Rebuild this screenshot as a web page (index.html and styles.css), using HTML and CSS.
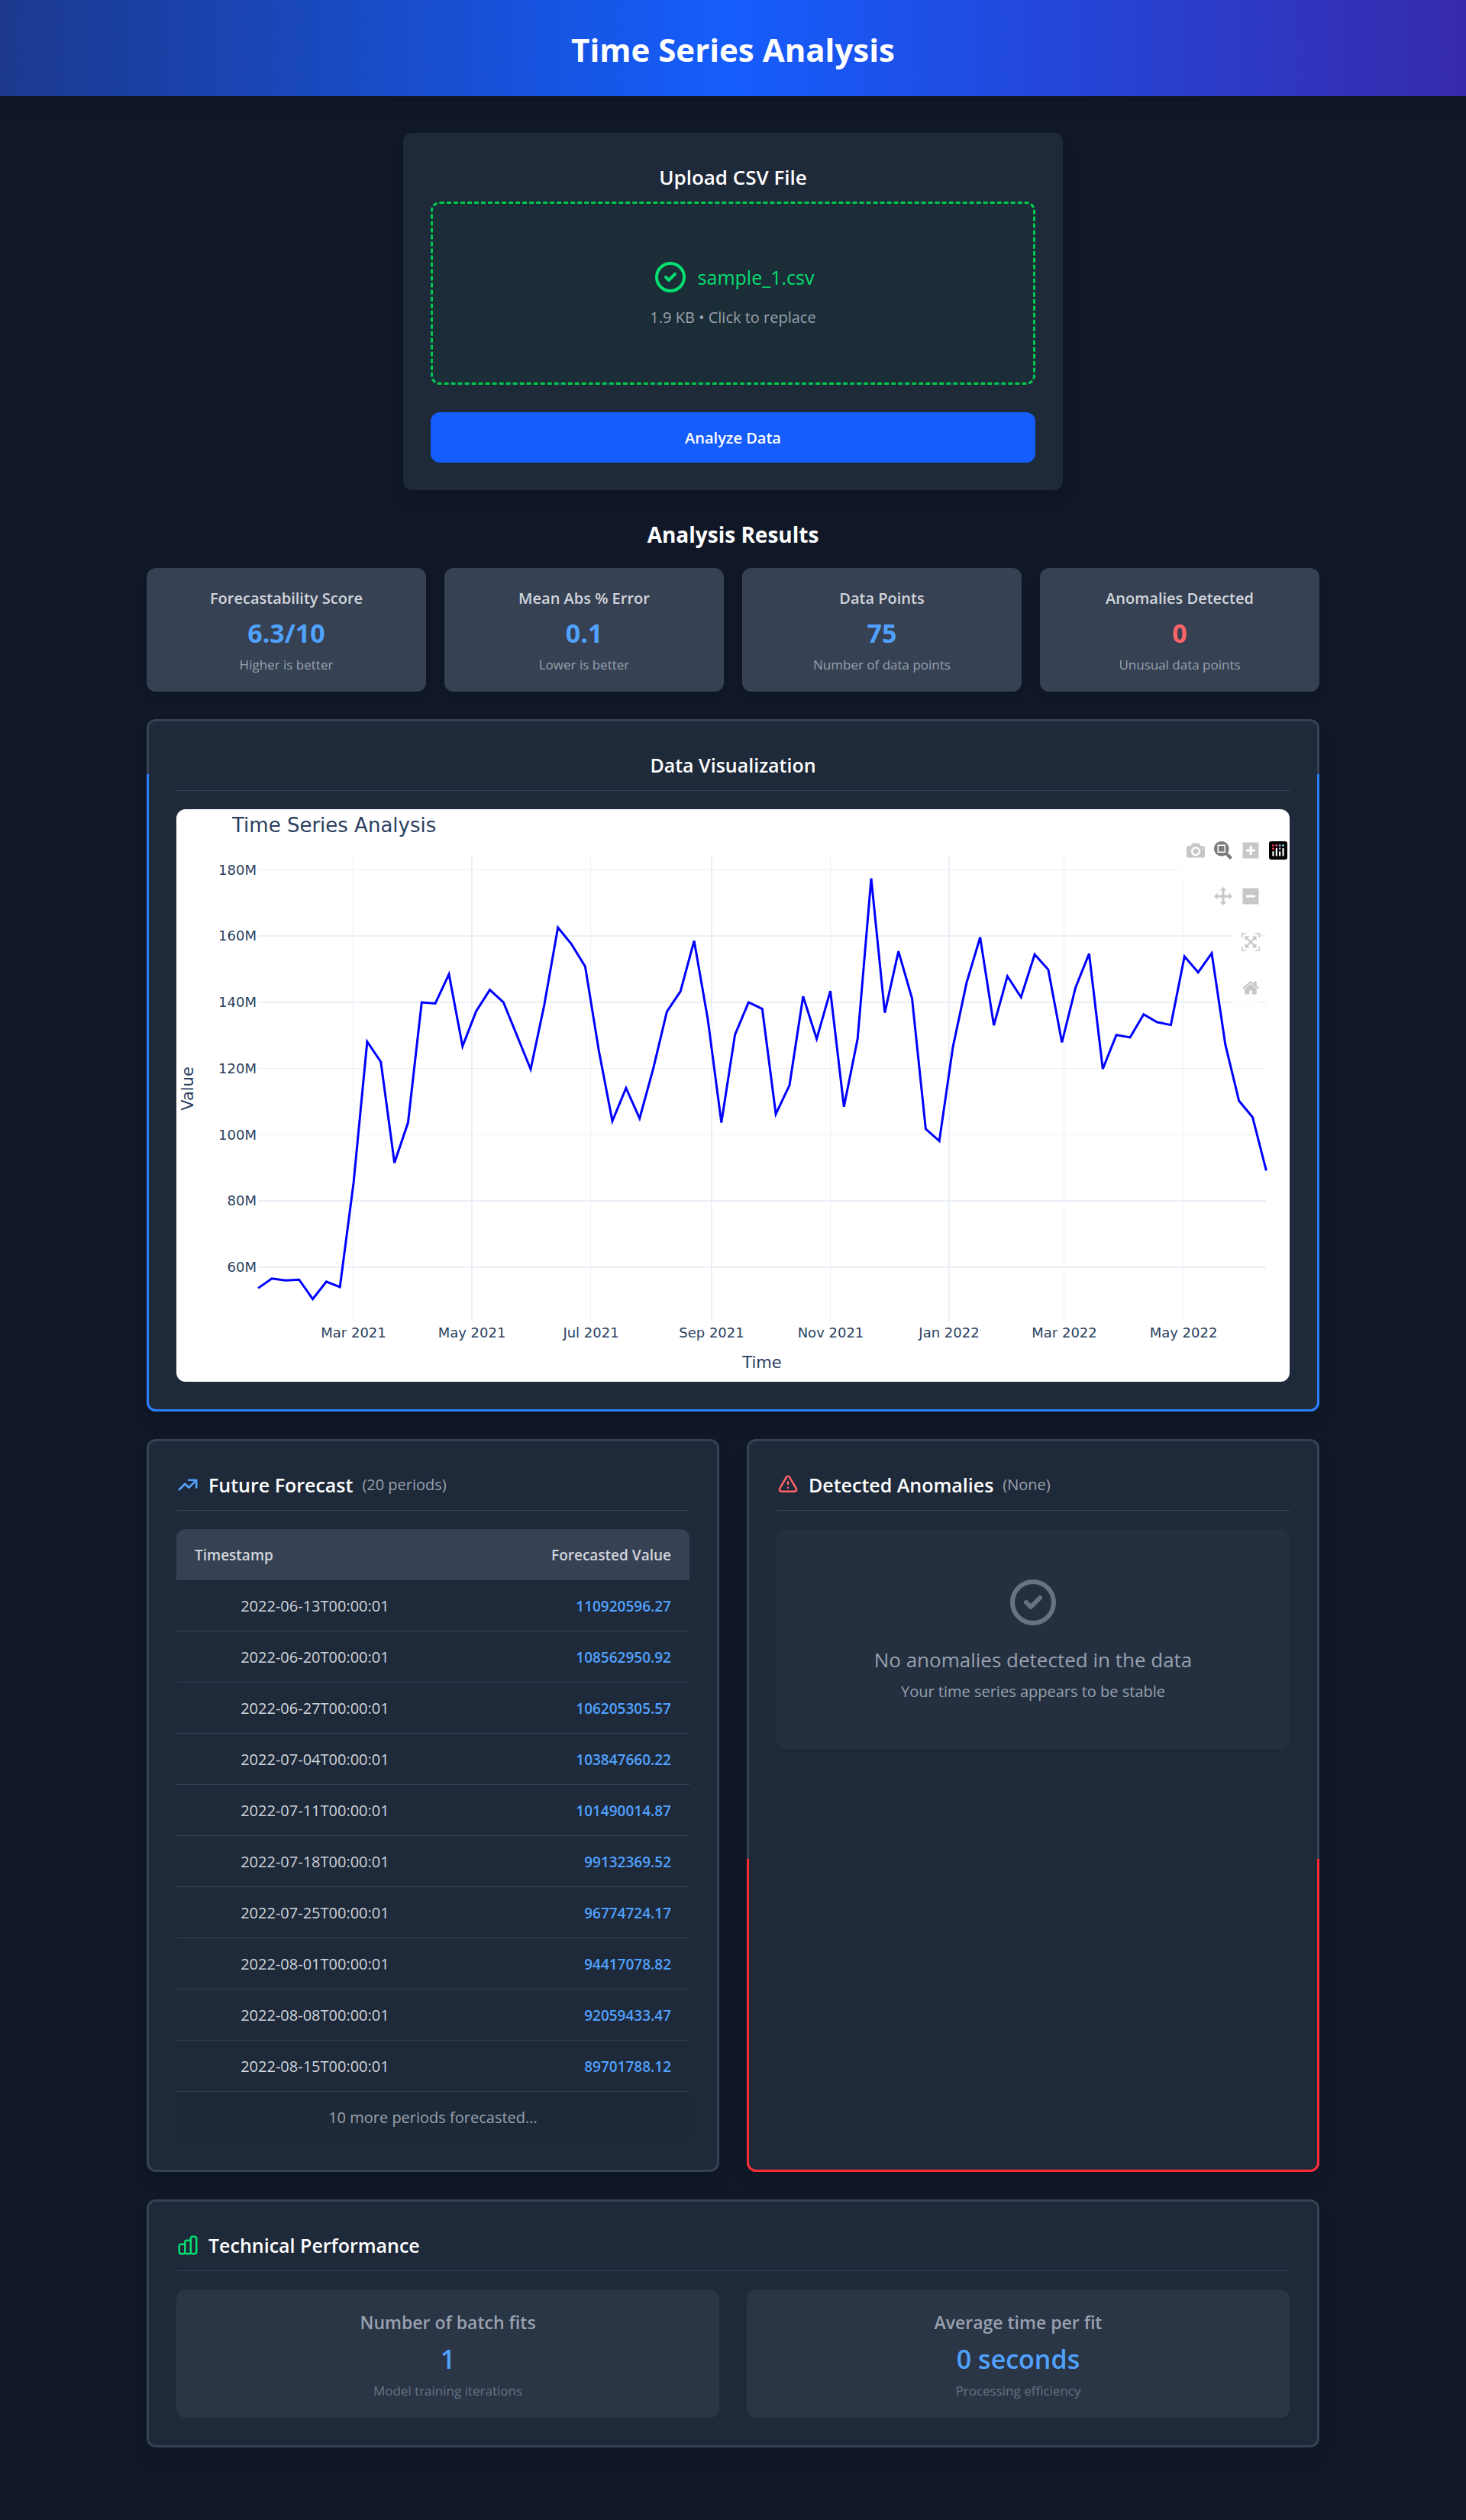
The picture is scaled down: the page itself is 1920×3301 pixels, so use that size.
FILE: index.html
```html
<!DOCTYPE html>
<html lang="en">
<head>
  <meta charset="utf-8">
  <meta name="viewport" content="width=device-width, initial-scale=1">
  <title>Time Series Analysis</title>
  <link rel="stylesheet" href="styles.css">
</head>
<body>
  <header class="site-header">
    <h1>Time Series Analysis</h1>
  </header>

  <main class="page">
    <form class="upload">
      <h2 class="upload-title">Upload CSV File</h2>
      <label class="dropzone" for="csv-file">
        <span class="dropzone-file">
          <svg class="icon-md" viewBox="0 0 24 24" aria-hidden="true"><path d="M9 12l2 2 4-4m6 2a9 9 0 11-18 0 9 9 0 0118 0z"/></svg>
          <span>sample_1.csv</span>
        </span>
        <span class="dropzone-hint">1.9 KB • Click to replace</span>
      </label>
      <input class="visually-hidden" id="csv-file" type="file" accept=".csv">
      <button class="analyze" type="button">Analyze Data</button>
    </form>

    <h2 class="results-title">Analysis Results</h2>

    <section class="stats">
      <div class="stat">
        <h3>Forecastability Score</h3>
        <p class="stat-value">6.3/10</p>
        <p class="stat-note">Higher is better</p>
      </div>
      <div class="stat">
        <h3>Mean Abs % Error</h3>
        <p class="stat-value">0.1</p>
        <p class="stat-note">Lower is better</p>
      </div>
      <div class="stat">
        <h3>Data Points</h3>
        <p class="stat-value">75</p>
        <p class="stat-note">Number of data points</p>
      </div>
      <div class="stat">
        <h3>Anomalies Detected</h3>
        <p class="stat-value stat-value-alert">0</p>
        <p class="stat-note">Unusual data points</p>
      </div>
    </section>

    <section class="card card-chart">
      <h3 class="card-title card-title-center">Data Visualization</h3>
      <div class="chart">
        <svg class="plot" viewBox="0 0 1458 750" role="img" aria-label="Weekly values from January 2021 to June 2022">
          <g class="grid">
            <path d="M107 79.5H1427M107 339.5H1427M107 426.5H1427M231.5 60V671M542.5 60V671M856.5 60V671M1162.5 60V671M1318.5 60V671"/>
            <path class="grid-strong" d="M107 166H1427M107 253H1427M107 513H1427M107 600H1427M387 60V671M701 60V671M1012 60V671"/>
          </g>
          <polyline class="series" points="107.2,627.4 125,614.7 142.9,617.2 160.7,616.2 178.6,641.7 196.4,618.8 214.2,625.9 232.1,489.2 249.9,304.5 267.8,331 285.6,463.2 303.4,410.6 321.3,253 339.1,254.5 357,216.2 374.8,310.6 392.6,264.7 410.5,236.6 428.3,253 446.2,296.8 464,340.7 481.8,256.5 499.7,155 517.5,176.9 535.4,206 553.2,315.7 571,408.6 588.9,365.2 606.7,405 624.6,339.7 642.4,265.2 660.2,238.7 678.1,172.3 695.9,274.4 713.8,410.6 731.6,295.3 749.4,253 767.3,261.6 785.1,399.4 803,361.6 820.8,245.3 838.6,300.9 856.5,238.2 874.3,389.7 892.2,300.9 910,90.7 927.8,266.7 945.7,186.1 963.5,247.9 981.4,418.8 999.2,434.6 1017,311.6 1034.9,227.4 1052.7,167.8 1070.6,283.1 1088.4,218.8 1106.2,246.3 1124.1,190.2 1141.9,210.1 1159.8,305.5 1177.6,233.6 1195.4,189.2 1213.3,340.2 1231.1,295.8 1249,298.9 1266.8,268.8 1284.6,279 1302.5,282.6 1320.3,192.8 1338.2,213.7 1356,188.7 1373.8,308.1 1391.7,382 1409.5,403.5 1427.4,473.4"/>
          <text class="plot-title" x="73" y="30">Time Series Analysis</text>
          <g class="ticks ticks-y">
            <text x="105" y="86">180M</text>
            <text x="105" y="172">160M</text>
            <text x="105" y="259">140M</text>
            <text x="105" y="346">120M</text>
            <text x="105" y="433">100M</text>
            <text x="105" y="519">80M</text>
            <text x="105" y="606">60M</text>
          </g>
          <g class="ticks ticks-x">
            <text x="232" y="692">Mar 2021</text>
            <text x="387" y="692">May 2021</text>
            <text x="543" y="692">Jul 2021</text>
            <text x="701" y="692">Sep 2021</text>
            <text x="857" y="692">Nov 2021</text>
            <text x="1012" y="692">Jan 2022</text>
            <text x="1163" y="692">Mar 2022</text>
            <text x="1319" y="692">May 2022</text>
          </g>
          <text class="axis-title" x="767" y="732">Time</text>
          <text class="axis-title" transform="translate(22 366) rotate(-90)">Value</text>
        </svg>
        <div class="modebar">
          <div class="modebar-group">
            <button type="button" aria-label="Download plot as a png"><svg viewBox="0 0 1000 1000"><path transform="matrix(1 0 0 -1 0 850)" d="m500 450c-83 0-150-67-150-150 0-83 67-150 150-150 83 0 150 67 150 150 0 83-67 150-150 150z m400 150h-120c-16 0-34 13-39 29l-31 93c-6 15-23 28-40 28h-340c-16 0-34-13-39-28l-31-94c-6-15-23-28-40-28h-120c-55 0-100-45-100-100v-450c0-55 45-100 100-100h800c55 0 100 45 100 100v450c0 55-45 100-100 100z m-400-550c-138 0-250 112-250 250 0 138 112 250 250 250 138 0 250-112 250-250 0-138-112-250-250-250z m365 380c-19 0-35 16-35 35 0 19 16 35 35 35 19 0 35-16 35-35 0-19-16-35-35-35z"/></svg></button>
          </div>
          <div class="modebar-group">
            <button class="active" type="button" aria-label="Zoom"><svg viewBox="0 0 1000 1000"><path transform="matrix(1 0 0 -1 0 850)" d="m1000-25l-250 251c40 63 63 138 63 218 0 224-182 406-407 406-224 0-406-182-406-406s183-406 407-406c80 0 155 22 218 62l250-250 125 125z m-812 250l0 438 437 0 0-438-437 0z m62 375l313 0 0-312-313 0 0 312z"/></svg></button>
            <button type="button" aria-label="Pan"><svg viewBox="0 0 1000 1000"><path transform="matrix(1 0 0 -1 0 850)" d="m1000 350l-187 188 0-125-250 0 0 250 125 0-188 187-187-187 125 0 0-250-250 0 0 125-188-188 186-187 0 125 252 0 0-250-125 0 187-188 188 188-125 0 0 250 250 0 0-126 187 188z"/></svg></button>
          </div>
          <div class="modebar-group">
            <button type="button" aria-label="Zoom in"><svg viewBox="0 0 875 1000"><path transform="matrix(1 0 0 -1 0 850)" d="m1 787l0-875 875 0 0 875-875 0z m687-500l-187 0 0-187-125 0 0 187-188 0 0 125 188 0 0 187 125 0 0-187 187 0 0-125z"/></svg></button>
            <button type="button" aria-label="Zoom out"><svg viewBox="0 0 875 1000"><path transform="matrix(1 0 0 -1 0 850)" d="m0 788l0-876 875 0 0 876-875 0z m688-500l-500 0 0 125 500 0 0-125z"/></svg></button>
            <button type="button" aria-label="Autoscale"><svg viewBox="0 0 1000 1000"><path transform="matrix(1 0 0 -1 0 850)" d="m250 850l-187 0-63 0 0-62 0-188 63 0 0 188 187 0 0 62z m688 0l-188 0 0-62 188 0 0-188 62 0 0 188 0 62-62 0z m-875-938l0 188-63 0 0-188 0-62 63 0 187 0 0 62-187 0z m875 188l0-188-188 0 0-62 188 0 62 0 0 62 0 188-62 0z m-125 188l-1 0-93-94-156 156 156 156 92-93 2 0 0 250-250 0 0-2 93-92-156-156-156 156 94 92 0 2-250 0 0-250 0 0 93 93 157-156-157-156-93 94 0 0 0-250 250 0 0 0-94 93 156 157 156-157-93-93 0 0 250 0 0 250z"/></svg></button>
            <button type="button" aria-label="Reset axes"><svg viewBox="0 0 928.6 1000"><path transform="matrix(1 0 0 -1 0 850)" d="m786 296v-267q0-15-11-26t-25-10h-214v214h-143v-214h-214q-15 0-25 10t-11 26v267q0 1 0 2t0 2l321 264 321-264q1-1 1-4z m124 39l-34-41q-5-5-12-6h-2q-7 0-12 3l-386 322-386-322q-7-4-13-4-7 2-12 7l-35 41q-4 5-3 13t6 12l401 334q18 15 42 15t43-15l136-114v109q0 8 5 13t13 5h107q8 0 13-5t5-13v-227l122-102q5-5 6-12t-4-13z"/></svg></button>
          </div>
          <div class="modebar-group">
            <a href="#" aria-label="Produced with Plotly.js"><svg viewBox="0 0 132 132">
              <rect width="132" height="132" rx="18" fill="#000"/>
              <circle cx="30" cy="30" r="8" fill="#f0325a"/>
              <circle cx="30" cy="54" r="8" fill="#f0325a"/>
              <circle cx="54" cy="30" r="8" fill="#e0568c"/>
              <circle cx="78" cy="30" r="8" fill="#a9a0cc"/>
              <circle cx="78" cy="54" r="8" fill="#a9a0cc"/>
              <circle cx="102" cy="30" r="8" fill="#6fd6e6"/>
              <path fill="#fff" d="M30,72a6,6,0,0,0-6,6v24a6,6,0,0,0,12,0V78A6,6,0,0,0,30,72ZM78,72a6,6,0,0,0-6,6v24a6,6,0,0,0,12,0V78A6,6,0,0,0,78,72ZM54,48a6,6,0,0,0-6,6v48a6,6,0,0,0,12,0V54A6,6,0,0,0,54,48ZM102,48a6,6,0,0,0-6,6v48a6,6,0,0,0,12,0V54A6,6,0,0,0,102,48Z"/>
            </svg></a>
          </div>
        </div>
      </div>
    </section>

    <div class="columns">
      <section class="card">
        <h3 class="card-title">
          <svg class="icon-sm icon-blue" viewBox="0 0 24 24" aria-hidden="true"><path d="M13 7h8m0 0v8m0-8l-8 8-4-4-6 6"/></svg>
          <span>Future Forecast</span>
          <span class="card-count">(20 periods)</span>
        </h3>
        <table class="forecast">
          <thead>
            <tr><th scope="col">Timestamp</th><th scope="col">Forecasted Value</th></tr>
          </thead>
          <tbody>
            <tr><td>2022-06-13T00:00:01</td><td>110920596.27</td></tr>
            <tr><td>2022-06-20T00:00:01</td><td>108562950.92</td></tr>
            <tr><td>2022-06-27T00:00:01</td><td>106205305.57</td></tr>
            <tr><td>2022-07-04T00:00:01</td><td>103847660.22</td></tr>
            <tr><td>2022-07-11T00:00:01</td><td>101490014.87</td></tr>
            <tr><td>2022-07-18T00:00:01</td><td>99132369.52</td></tr>
            <tr><td>2022-07-25T00:00:01</td><td>96774724.17</td></tr>
            <tr><td>2022-08-01T00:00:01</td><td>94417078.82</td></tr>
            <tr><td>2022-08-08T00:00:01</td><td>92059433.47</td></tr>
            <tr><td>2022-08-15T00:00:01</td><td>89701788.12</td></tr>
          </tbody>
          <tfoot>
            <tr><td colspan="2">10 more periods forecasted...</td></tr>
          </tfoot>
        </table>
      </section>

      <section class="card card-anomalies">
        <h3 class="card-title">
          <svg class="icon-sm icon-red" viewBox="0 0 24 24" aria-hidden="true"><path d="M12 9v2m0 4h.01m-6.938 4h13.856c1.54 0 2.502-1.667 1.732-3L13.732 4c-.77-1.333-2.694-1.333-3.464 0L3.34 16c-.77 1.333.192 3 1.732 3z"/></svg>
          <span>Detected Anomalies</span>
          <span class="card-count">(None)</span>
        </h3>
        <div class="empty">
          <svg class="icon-lg" viewBox="0 0 24 24" aria-hidden="true"><path d="M9 12l2 2 4-4m6 2a9 9 0 11-18 0 9 9 0 0118 0z"/></svg>
          <p class="empty-title">No anomalies detected in the data</p>
          <p class="empty-note">Your time series appears to be stable</p>
        </div>
      </section>
    </div>

    <section class="card">
      <h3 class="card-title">
        <svg class="icon-sm icon-green" viewBox="0 0 24 24" aria-hidden="true"><path d="M9 19v-6a2 2 0 00-2-2H5a2 2 0 00-2 2v6a2 2 0 002 2h2a2 2 0 002-2zm0 0V9a2 2 0 012-2h2a2 2 0 012 2v10m-6 0a2 2 0 002 2h2a2 2 0 002-2m0 0V5a2 2 0 012-2h2a2 2 0 012 2v14a2 2 0 01-2 2h-2a2 2 0 01-2-2z"/></svg>
        <span>Technical Performance</span>
      </h3>
      <div class="columns">
        <div class="metric">
          <h4>Number of batch fits</h4>
          <p class="metric-value">1</p>
          <p class="metric-note">Model training iterations</p>
        </div>
        <div class="metric">
          <h4>Average time per fit</h4>
          <p class="metric-value">0 seconds</p>
          <p class="metric-note">Processing efficiency</p>
        </div>
      </div>
    </section>
  </main>
</body>
</html>
```
FILE: styles.css
```css
:root {
  --bg: #101828;
  --surface: #1e2939;
  --surface-raised: #364153;
  --text-soft: #d1d5dc;
  --text-muted: #99a1af;
  --text-dim: #6a7282;
  --blue: #51a2ff;
  --red: #ff6467;
  --green: #05df72;
  --shadow: 0 15px 22px -4px rgba(0, 0, 0, 0.1), 0 6px 9px -6px rgba(0, 0, 0, 0.1);
}

* {
  box-sizing: border-box;
  margin: 0;
  padding: 0;
}

body {
  min-height: 100vh;
  background: var(--bg);
  color: #fff;
  font-family: "Open Sans", "Noto Sans", sans-serif;
  font-size: 20px;
  line-height: 30px;
  text-align: center;
}

button {
  border: 0;
  font: inherit;
  cursor: pointer;
}

svg {
  display: block;
}

.site-header {
  padding: 38px 36px 34px;
  background: linear-gradient(to right, #1c398e, #155dfc, #372aac);
  box-shadow: var(--shadow);
}

.site-header h1 {
  font-size: 42px;
  line-height: 54px;
  font-weight: 700;
}

.page {
  display: flex;
  flex-direction: column;
  gap: 36px;
  width: 100%;
  max-width: 1608px;
  margin: 0 auto;
  padding: 48px 36px;
}

/* Upload form */

.upload {
  display: flex;
  flex-direction: column;
  width: 100%;
  max-width: 864px;
  margin: 0 auto;
  padding: 36px;
  border-radius: 12px;
  background: var(--surface);
  box-shadow: var(--shadow);
}

.upload-title {
  margin-bottom: 10px;
  font-size: 26px;
  line-height: 44px;
  font-weight: 600;
}

.dropzone {
  display: flex;
  flex-direction: column;
  gap: 14px;
  padding: 72px 72px 70px;
  border: 3px dashed #00c950;
  border-radius: 12px;
  background: rgba(13, 84, 43, 0.1);
  cursor: pointer;
}

.dropzone-file {
  display: flex;
  align-items: center;
  justify-content: center;
  gap: 12px;
  color: var(--green);
  font-size: 25px;
  font-weight: 500;
}

.dropzone-hint {
  color: var(--text-muted);
}

.visually-hidden {
  position: absolute;
  width: 1px;
  height: 1px;
  overflow: hidden;
  clip-path: inset(50%);
}

.analyze {
  margin-top: 36px;
  padding: 19px 18px 17px;
  border-radius: 12px;
  background: #155dfc;
  color: #fff;
  font-weight: 600;
}

/* Icons */

.icon-sm,
.icon-md,
.icon-lg {
  flex: none;
  fill: none;
  stroke: currentColor;
  stroke-width: 2;
  stroke-linecap: round;
  stroke-linejoin: round;
}

.icon-sm {
  width: 30px;
  height: 30px;
}

.icon-md {
  width: 48px;
  height: 48px;
}

.icon-lg {
  width: 72px;
  height: 72px;
}

.icon-blue {
  color: var(--blue);
}

.icon-red {
  color: var(--red);
}

.icon-green {
  color: var(--green);
}

/* Summary figures */

.results-title {
  margin-bottom: -14px;
  font-size: 28px;
  line-height: 44px;
  font-weight: 700;
}

.stats {
  display: grid;
  grid-template-columns: repeat(4, 1fr);
  gap: 24px;
}

.stat,
.metric {
  display: flex;
  flex-direction: column;
  gap: 6px;
  padding: 25px 24px 23px;
  border-radius: 12px;
}

.stat {
  background: var(--surface-raised);
  box-shadow: 0 6px 9px -2px rgba(0, 0, 0, 0.1);
}

.stat h3 {
  color: var(--text-soft);
  font-size: 20px;
  font-weight: 600;
}

.stat-value {
  color: var(--blue);
  font-size: 34px;
  line-height: 48px;
  font-weight: 700;
}

.stat-value-alert {
  color: var(--red);
}

.stat-note,
.metric-note {
  color: var(--text-muted);
  font-size: 17px;
  line-height: 24px;
}

/* Cards */

.card {
  position: relative;
  padding: 36px;
  border: 3px solid var(--surface-raised);
  border-radius: 12px;
  background: var(--surface);
  box-shadow: var(--shadow);
}

.card-chart::after,
.card-anomalies::after {
  content: "";
  position: absolute;
  inset: -3px;
  border: 3px solid #2b7fff;
  border-radius: 12px;
  clip-path: inset(72px 0 0 0);
  pointer-events: none;
}

.card-anomalies::after {
  border-color: #fb2c36;
  clip-path: inset(550px 0 0 0);
}

.card-title {
  display: flex;
  align-items: center;
  gap: 12px;
  margin-bottom: 24px;
  padding-bottom: 12px;
  border-bottom: 1px solid var(--surface-raised);
  font-size: 25px;
  line-height: 42px;
  font-weight: 600;
}

.card-title-center {
  justify-content: center;
}

.card-count {
  color: var(--text-muted);
  font-size: 20px;
  font-weight: 400;
}

.columns {
  display: grid;
  grid-template-columns: repeat(2, 1fr);
  gap: 36px;
}

/* Chart */

.chart {
  position: relative;
  overflow: hidden;
  border-radius: 12px;
  background: #fff;
}

.plot {
  width: 100%;
  height: auto;
  font-family: Verdana, "DejaVu Sans", sans-serif;
  fill: #2a3f5f;
}

.grid {
  fill: none;
  stroke: #ebf0f8;
  stroke-width: 1;
}

.grid-strong {
  stroke-width: 2;
}

.series {
  fill: none;
  stroke: #00f;
  stroke-width: 3;
}

.plot-title {
  font-size: 26px;
}

.ticks {
  font-size: 18px;
}

.ticks-y {
  text-anchor: end;
}

.ticks-x,
.axis-title {
  text-anchor: middle;
}

.axis-title {
  font-size: 21px;
}

.modebar {
  position: absolute;
  top: 24px;
  right: 3px;
  display: flex;
  align-items: flex-start;
}

.modebar-group {
  display: flex;
  flex-direction: column;
  padding: 0 0 15px 12px;
  background: rgba(255, 255, 255, 0.7);
}

.modebar button,
.modebar a {
  display: block;
  width: 24px;
  height: 60px;
  padding: 18px 0;
  background: none;
}

.modebar svg {
  width: 24px;
  height: 24px;
  fill: rgba(68, 68, 68, 0.3);
}

.modebar .active svg {
  fill: rgba(68, 68, 68, 0.7);
}

/* Forecast table */

.forecast {
  width: 100%;
  overflow: hidden;
  border-collapse: separate;
  border-spacing: 0;
  border-radius: 12px;
}

.forecast th,
.forecast td {
  padding: 19px 24px 17px;
}

.forecast th {
  border-bottom: 1px solid var(--surface-raised);
  background: var(--surface-raised);
  color: var(--text-soft);
  font-size: 19px;
  font-weight: 600;
  text-align: left;
}

.forecast th:first-child {
  width: 54%;
}

.forecast tbody td {
  border-bottom: 1px solid var(--surface-raised);
  color: var(--text-soft);
}

.forecast th:last-child,
.forecast tbody td:last-child {
  text-align: right;
}

.forecast tbody td:last-child {
  color: var(--blue);
  font-size: 19px;
  font-weight: 600;
}

.forecast tfoot td {
  background: #1e2937;
  color: var(--text-muted);
  font-weight: 500;
}

/* Empty state */

.empty {
  display: flex;
  flex-direction: column;
  align-items: center;
  padding: 60px 24px;
  border-radius: 12px;
  background: rgba(54, 65, 83, 0.3);
  color: var(--text-muted);
}

.empty .icon-lg {
  margin-bottom: 18px;
  color: var(--text-dim);
}

.empty-title {
  margin-bottom: 6px;
  font-size: 26px;
  line-height: 42px;
}

/* Technical metrics */

.metric {
  background: rgba(54, 65, 83, 0.5);
}

.metric h4 {
  color: var(--text-muted);
  font-size: 23px;
  line-height: 36px;
  font-weight: 600;
}

.metric-value {
  color: var(--blue);
  font-size: 34px;
  line-height: 48px;
  font-weight: 600;
}

.metric-note {
  color: var(--text-dim);
}

@media (max-width: 900px) {
  .stats,
  .columns {
    grid-template-columns: 1fr;
  }
}
```
